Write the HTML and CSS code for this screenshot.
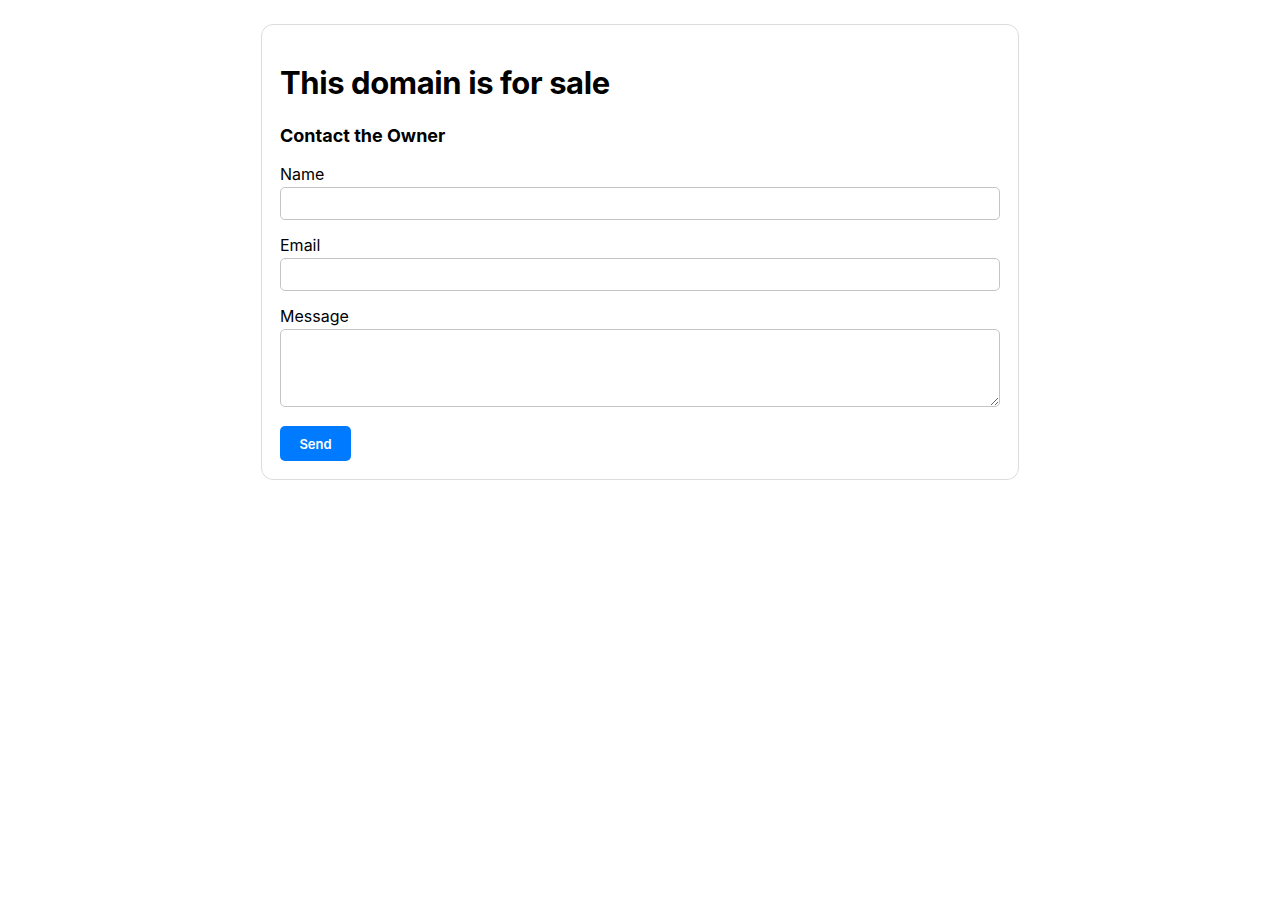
FILE: index.html
```html
<!DOCTYPE html>
<html lang="en">
<head>
<meta charset="utf-8">
<title>This domain is for sale</title>
<link rel="stylesheet" href="styles.css">
</head>
<body>
<main class="card">
  <h1 class="title">This domain is for sale</h1>
  <h2 class="subtitle">Contact the Owner</h2>
  <form class="form">
    <div class="field">
      <label class="label" for="name">Name</label>
      <input class="input" id="name" type="text">
    </div>
    <div class="field">
      <label class="label" for="email">Email</label>
      <input class="input" id="email" type="email">
    </div>
    <div class="field">
      <label class="label" for="message">Message</label>
      <textarea class="input textarea" id="message"></textarea>
    </div>
    <div class="actions">
      <button class="button" type="button">Send</button>
    </div>
  </form>
</main>
</body>
</html>
```

FILE: styles.css
```css
html, body {
  margin: 0;
  padding: 0;
  background: #ffffff;
}
body {
  font-family: Inter, "Noto Sans", "Liberation Sans", sans-serif;
  color: #000000;
  padding-top: 24px;
}
.card {
  box-sizing: border-box;
  width: 758px;
  margin: 0 auto;
  padding: 18px;
  border: 1px solid #dcdcdc;
  border-radius: 12px;
}
.title {
  font-size: 31px;
  font-weight: 700;
  letter-spacing: -0.4px;
  margin: 21px 0 0;
  line-height: 1.21;
}
.subtitle {
  font-size: 18px;
  font-weight: 700;
  margin: 23px 0 0;
  line-height: 1.21;
}
.form {
  display: flex;
  flex-direction: column;
  margin-top: 19px;
}
.field {
  display: flex;
  flex-direction: column;
  margin-bottom: 16px;
}
.field:last-of-type {
  margin-bottom: 13px;
}
.label {
  font-size: 16px;
  line-height: 19px;
  margin-bottom: 3px;
}
.input {
  box-sizing: border-box;
  width: 100%;
  height: 33px;
  margin: 0;
  padding: 6px 8px;
  border: 1px solid #c4c4c4;
  border-radius: 5px;
  font-family: inherit;
  font-size: 14px;
  background: #fff;
}
.textarea {
  height: 78px;
  resize: vertical;
}
.actions {
  display: flex;
  padding-top: 3px;
}
.button {
  width: 71px;
  height: 35px;
  border: none;
  border-radius: 5px;
  background: #007bff;
  color: #ffffff;
  font-family: inherit;
  font-size: 13px;
  font-weight: 600;
  cursor: pointer;
}
```
